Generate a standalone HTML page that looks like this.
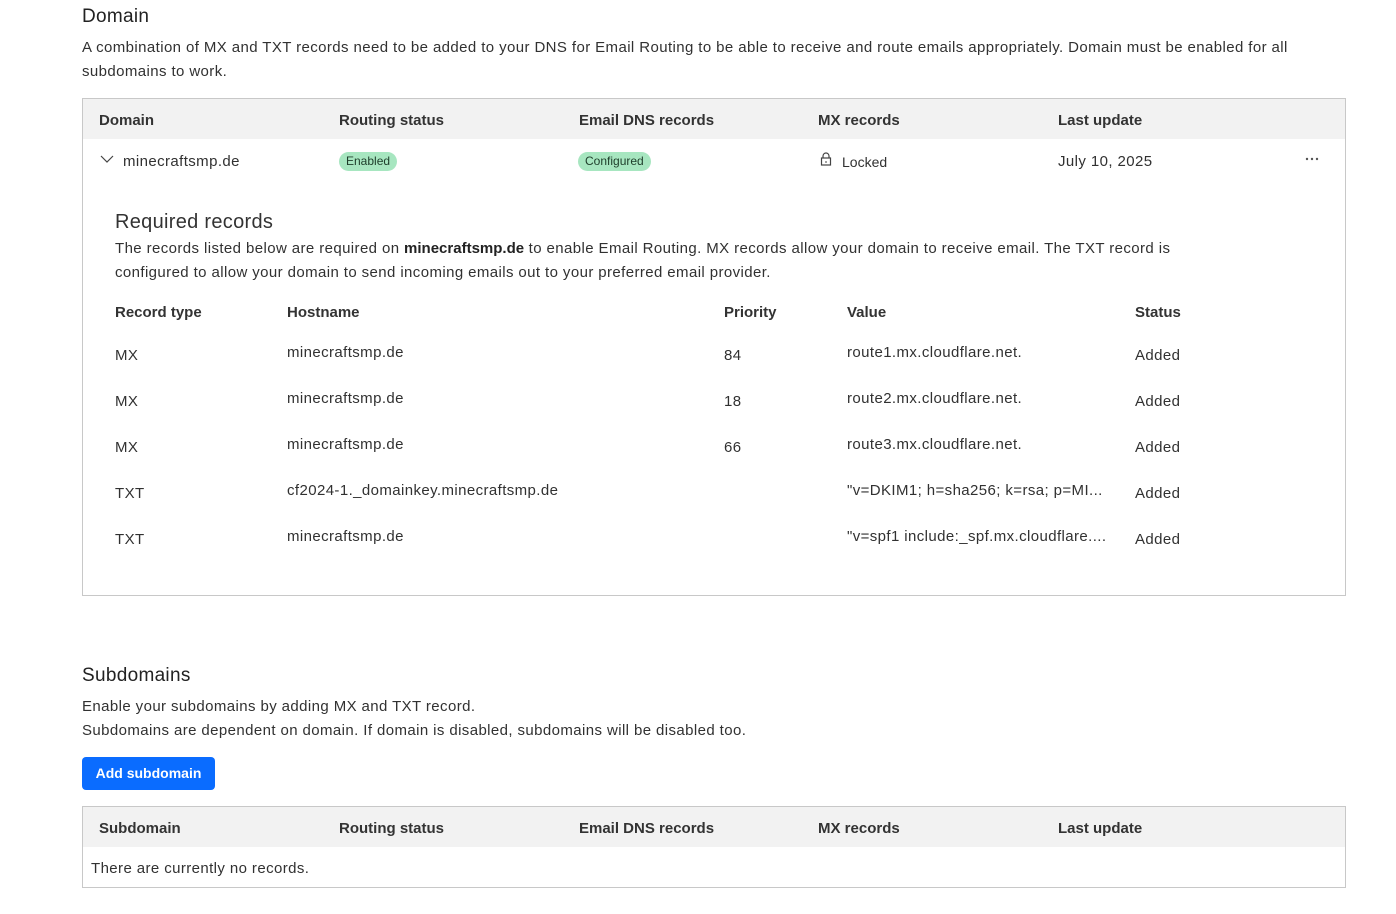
<!DOCTYPE html>
<html><head><meta charset="utf-8"><style>
*{margin:0;padding:0;box-sizing:border-box}
body{width:1396px;height:914px;background:#fff;font-family:"Liberation Sans",sans-serif;color:#313131;font-size:15px;position:relative;overflow:hidden;letter-spacing:0.4px}
.a{position:absolute;white-space:nowrap;margin-top:2px}
.h{font-size:19px;color:#222;letter-spacing:0.3px}
.b{font-weight:bold;color:#333;letter-spacing:0}
.box{position:absolute;border:1px solid #c8c8c8}
.hd{position:absolute;left:0;right:0;top:0;height:40px;background:#f2f2f2}
.pill{position:absolute;background:#a7e6c0;border-radius:10px;font-size:12px;height:19px;line-height:19px;padding:0 7px;color:#1e3d2a;letter-spacing:0}
.btn{position:absolute;left:82px;top:757px;width:133px;height:33px;background:#0a6cff;border-radius:4px;color:#fff;font-weight:bold;font-size:14px;line-height:33px;text-align:center;letter-spacing:0}
</style></head><body>
<div class="a h" style="left:82px;top:4px">Domain</div>
<div class="a" style="left:82px;top:37px">A combination of MX and TXT records need to be added to your DNS for Email Routing to be able to receive and route emails appropriately. Domain must be enabled for all</div>
<div class="a" style="left:82px;top:61px">subdomains to work.</div>

<div class="box" style="left:82px;top:98px;width:1264px;height:498px">
<div class="hd"></div>
</div>
<div class="a b" style="left:99px;top:110px">Domain</div>
<div class="a b" style="left:339px;top:110px">Routing status</div>
<div class="a b" style="left:579px;top:110px">Email DNS records</div>
<div class="a b" style="left:818px;top:110px">MX records</div>
<div class="a b" style="left:1058px;top:110px">Last update</div>

<svg class="a" style="left:100px;top:154px;margin:0" width="14" height="10"><path d="M1 2 L7 8 L13 2" fill="none" stroke="#444" stroke-width="1.2"/></svg>
<div class="a" style="left:123px;top:151px">minecraftsmp.de</div>
<div class="pill" style="left:339px;top:152px">Enabled</div>
<div class="pill" style="left:578px;top:152px">Configured</div>
<svg class="a" style="left:820px;top:152px;margin:0" width="12" height="14"><path d="M3 6 V4 a3 3 0 0 1 6 0 V6" fill="none" stroke="#444" stroke-width="1.2"/><rect x="1.5" y="6" width="9" height="7" fill="none" stroke="#444" stroke-width="1.2"/><rect x="5.5" y="9" width="1" height="2" fill="#444"/></svg>
<div class="a" style="left:842px;top:152px;font-size:14px;letter-spacing:0">Locked</div>
<div class="a" style="left:1058px;top:151px">July 10, 2025</div>
<svg class="a" style="left:1305px;top:157px;margin:0" width="16" height="4"><circle cx="2" cy="2" r="1.2" fill="#555"/><circle cx="7" cy="2" r="1.2" fill="#555"/><circle cx="12" cy="2" r="1.2" fill="#555"/></svg>

<div class="a" style="left:115px;top:209px;font-size:20px;color:#333;letter-spacing:0.3px">Required records</div>
<div class="a" style="left:115px;top:238px">The records listed below are required on <b style="color:#222;letter-spacing:0">minecraftsmp.de</b> to enable Email Routing. MX records allow your domain to receive email. The TXT record is</div>
<div class="a" style="left:115px;top:262px">configured to allow your domain to send incoming emails out to your preferred email provider.</div>

<div class="a b" style="left:115px;top:302px">Record type</div>
<div class="a b" style="left:287px;top:302px">Hostname</div>
<div class="a b" style="left:724px;top:302px">Priority</div>
<div class="a b" style="left:847px;top:302px">Value</div>
<div class="a b" style="left:1135px;top:302px">Status</div>

<div class="a" style="left:115px;top:345px">MX</div><div class="a" style="left:287px;top:342px">minecraftsmp.de</div><div class="a" style="left:724px;top:345px">84</div><div class="a" style="left:847px;top:342px">route1.mx.cloudflare.net.</div><div class="a" style="left:1135px;top:345px">Added</div>
<div class="a" style="left:115px;top:391px">MX</div><div class="a" style="left:287px;top:388px">minecraftsmp.de</div><div class="a" style="left:724px;top:391px">18</div><div class="a" style="left:847px;top:388px">route2.mx.cloudflare.net.</div><div class="a" style="left:1135px;top:391px">Added</div>
<div class="a" style="left:115px;top:437px">MX</div><div class="a" style="left:287px;top:434px">minecraftsmp.de</div><div class="a" style="left:724px;top:437px">66</div><div class="a" style="left:847px;top:434px">route3.mx.cloudflare.net.</div><div class="a" style="left:1135px;top:437px">Added</div>
<div class="a" style="left:115px;top:483px">TXT</div><div class="a" style="left:287px;top:480px">cf2024-1._domainkey.minecraftsmp.de</div><div class="a" style="left:847px;top:480px">"v=DKIM1; h=sha256; k=rsa; p=MI...</div><div class="a" style="left:1135px;top:483px">Added</div>
<div class="a" style="left:115px;top:529px">TXT</div><div class="a" style="left:287px;top:526px">minecraftsmp.de</div><div class="a" style="left:847px;top:526px">"v=spf1 include:_spf.mx.cloudflare....</div><div class="a" style="left:1135px;top:529px">Added</div>

<div class="a h" style="left:82px;top:663px">Subdomains</div>
<div class="a" style="left:82px;top:696px">Enable your subdomains by adding MX and TXT record.</div>
<div class="a" style="left:82px;top:720px">Subdomains are dependent on domain. If domain is disabled, subdomains will be disabled too.</div>
<div class="btn">Add subdomain</div>

<div class="box" style="left:82px;top:806px;width:1264px;height:82px"><div class="hd"></div></div>
<div class="a b" style="left:99px;top:818px">Subdomain</div>
<div class="a b" style="left:339px;top:818px">Routing status</div>
<div class="a b" style="left:579px;top:818px">Email DNS records</div>
<div class="a b" style="left:818px;top:818px">MX records</div>
<div class="a b" style="left:1058px;top:818px">Last update</div>
<div class="a" style="left:91px;top:858px">There are currently no records.</div>
</body></html>
